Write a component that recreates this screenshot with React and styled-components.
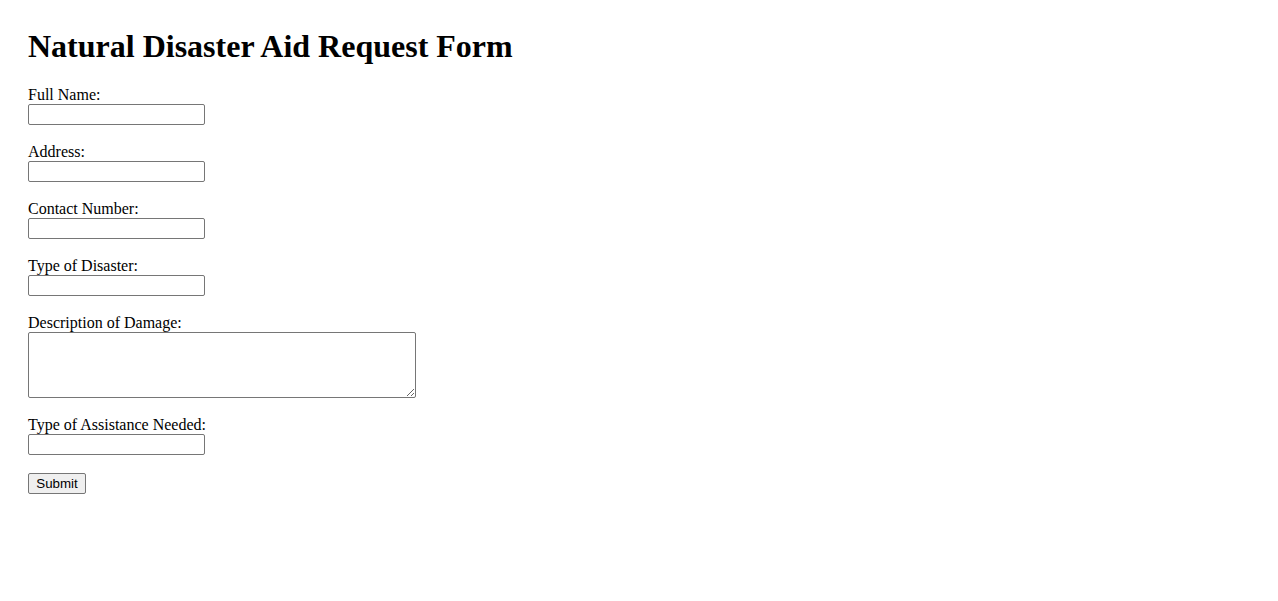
import React from "react";
import styled, { createGlobalStyle } from "styled-components";

const Global = createGlobalStyle`
  html, body { margin: 0; padding: 0; background: #fff; }
  body { font-family: "Liberation Serif", "Times New Roman", serif; font-size: 16px; color: #000; }
`;

const Page = styled.div`
  padding: 28px;
`;

const Title = styled.h1`
  margin: 0 0 21px;
  font-size: 32px;
  font-weight: bold;
  line-height: 37px;
`;

const Form = styled.form`
  display: flex;
  flex-direction: column;
  align-items: flex-start;
`;

const Field = styled.div`
  display: flex;
  flex-direction: column;
  align-items: flex-start;
  margin-bottom: 18px;
`;

const Label = styled.label`
  display: block;
  height: 18px;
  line-height: 18px;
  font-size: 16px;
`;

const Input = styled.input`
  box-sizing: border-box;
  width: 177px;
  height: 21px;
  margin: 0;
  padding: 1px 2px;
  border: 1px solid #767676;
  border-radius: 2px;
  background: #fff;
  font-family: "Liberation Sans", Arial, sans-serif;
  font-size: 13.33px;
`;

const TextArea = styled.textarea`
  box-sizing: border-box;
  width: 388px;
  height: 66px;
  margin: 0;
  padding: 2px;
  border: 1px solid #767676;
  border-radius: 2px;
  background: #fff;
  font-family: "Liberation Mono", monospace;
  font-size: 13.33px;
  display: block;
`;

const Button = styled.button`
  box-sizing: border-box;
  height: 21px;
  width: 58px;
  padding: 1px 6px;
  margin: 0;
  border: 1px solid #767676;
  border-radius: 2px;
  background: #efefef;
  color: #000;
  font-family: "Liberation Sans", Arial, sans-serif;
  font-size: 13.33px;
  line-height: 15px;
`;

const fields = [
  { id: "name", label: "Full Name:" },
  { id: "address", label: "Address:" },
  { id: "contact", label: "Contact Number:" },
  { id: "disaster", label: "Type of Disaster:" },
  { id: "damage", label: "Description of Damage:", area: true },
  { id: "assistance", label: "Type of Assistance Needed:" },
];

export default function App() {
  return (
    <Page>
      <Global />
      <Title>Natural Disaster Aid Request Form</Title>
      <Form onSubmit={(e) => e.preventDefault()}>
        {fields.map((f) => (
          <Field key={f.id}>
            <Label htmlFor={f.id}>{f.label}</Label>
            {f.area ? <TextArea id={f.id} /> : <Input id={f.id} type="text" />}
          </Field>
        ))}
        <Button type="submit">Submit</Button>
      </Form>
    </Page>
  );
}
